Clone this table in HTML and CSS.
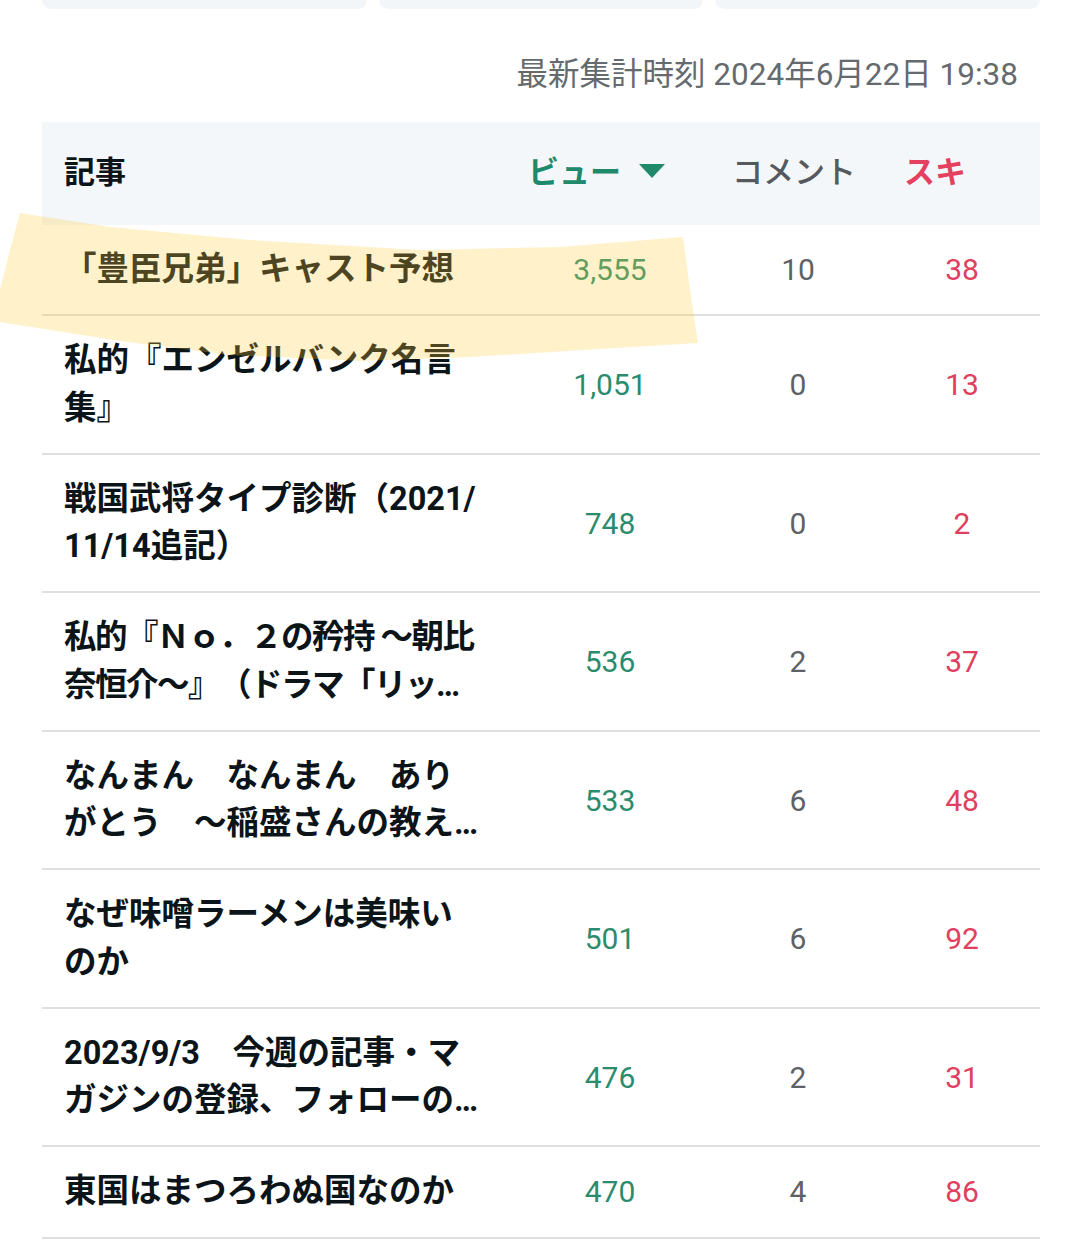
FILE: index.html
```html
<!DOCTYPE html>
<html lang="ja">
<head>
<meta charset="utf-8">
<title>記事アクセス状況</title>
<link rel="stylesheet" href="styles.css">
</head>
<body>
<div class="page">
  <div class="cards">
    <div class="card"></div>
    <div class="card"></div>
    <div class="card"></div>
  </div>
  <div class="stamp">最新集計時刻 2024年6月22日 19:38</div>
  <div class="table">
    <div class="row head">
      <div class="h-title">記事</div>
      <div class="h-view">ビュー<svg class="tri" width="26" height="14" viewBox="0 0 26 14"><polygon points="0,0 26,0 13,14" fill="#1f8a6b"/></svg></div>
      <div class="h-comment">コメント</div>
      <div class="h-like">スキ</div>
    </div>
    <div class="row">
      <div class="title">「豊臣兄弟」キャスト予想</div>
      <div class="num view">3,555</div>
      <div class="num comment">10</div>
      <div class="num like">38</div>
    </div>
    <div class="row">
      <div class="title">私的『エンゼルバンク名言集』</div>
      <div class="num view">1,051</div>
      <div class="num comment">0</div>
      <div class="num like">13</div>
    </div>
    <div class="row">
      <div class="title">戦国武将タイプ診断（2021/<wbr>11/14追記）</div>
      <div class="num view">748</div>
      <div class="num comment">0</div>
      <div class="num like">2</div>
    </div>
    <div class="row">
      <div class="title tight">私的『Ｎｏ．２の矜持 ～朝比奈恒介～』（ドラマ「リッチマン、プアウーマン」）</div>
      <div class="num view">536</div>
      <div class="num comment">2</div>
      <div class="num like">37</div>
    </div>
    <div class="row">
      <div class="title">なんまん　なんまん　ありがとう　～稲盛さんの教え～</div>
      <div class="num view">533</div>
      <div class="num comment">6</div>
      <div class="num like">48</div>
    </div>
    <div class="row">
      <div class="title">なぜ味噌ラーメンは美味いのか</div>
      <div class="num view">501</div>
      <div class="num comment">6</div>
      <div class="num like">92</div>
    </div>
    <div class="row">
      <div class="title">2023/9/3　今週の記事・マガジンの登録、フォローのお礼</div>
      <div class="num view">476</div>
      <div class="num comment">2</div>
      <div class="num like">31</div>
    </div>
    <div class="row">
      <div class="title">東国はまつろわぬ国なのか</div>
      <div class="num view">470</div>
      <div class="num comment">4</div>
      <div class="num like">86</div>
    </div>
  </div>
  <svg class="marker" width="1065" height="400" viewBox="0 0 1065 400">
    <polygon points="20,213 110,227 250,240 420,250 560,247 683,237 690,290 698,343 600,349 470,357 360,361 230,355 120,341 0,322 0,290 10,250" fill="rgba(255,204,60,0.27)"/>
  </svg>
</div>
</body>
</html>
```
FILE: styles.css
```css
* { box-sizing: border-box; }
html, body { margin: 0; padding: 0; background: #ffffff; }
body {
  font-family: "Noto Sans CJK JP", "Noto Sans", sans-serif;
  color: #0b1419;
  text-spacing-trim: space-all;
}
.page {
  position: relative;
  width: 1065px;
  padding: 0 25px 0 42px;
}
.cards {
  display: flex;
  gap: 12px;
}
.card {
  flex: 1;
  height: 9px;
  background: #f3f6f8;
  border-radius: 0 0 12px 12px;
}
.stamp {
  text-align: right;
  padding-right: 22px;
  margin-top: 46px;
  margin-bottom: 27px;
  height: 40px;
  line-height: 40px;
  font-family: Roboto, "Noto Sans CJK JP", sans-serif;
  font-size: 31.5px;
  color: #656a6e;
}
.table {
  width: 998px;
}
.row {
  display: grid;
  grid-template-columns: 421px 158px 126px 110px;
  column-gap: 46px;
  align-items: center;
  padding: 21px 0 21px 22px;
  border-bottom: 2px solid #dedfe0;
}
.row.head {
  background: #f4f7f9;
  border-bottom: none;
  height: 103px;
  padding-top: 0;
  padding-bottom: 8px;
  font-size: 31px;
  font-weight: 700;
  grid-template-columns: 418px 158px 126px 110px;
}
.h-title { color: #0b1419; }
.h-view {
  color: #1f8a6b;
  display: flex;
  align-items: center;
  gap: 18px;
}
.tri { display: block; margin-top: 2px; }
.h-comment { color: #55595d; font-weight: 500; }
.h-like { color: #e4405f; }
.title {
  width: 418px;
  font-family: Roboto, "Noto Sans CJK JP", sans-serif;
  font-size: 32.5px;
  font-weight: 700;
  line-height: 47.25px;
  display: -webkit-box;
  -webkit-line-clamp: 2;
  -webkit-box-orient: vertical;
  overflow: hidden;
}
.title.tight { letter-spacing: -1.5px; }
.num {
  text-align: center;
  font-family: Roboto, "Noto Sans", sans-serif;
  font-size: 30px;
}
.view { color: #2a8c6c; }
.comment { color: #5e6266; }
.like { color: #e0405e; }
.marker {
  position: absolute;
  left: 0;
  top: 0;
  pointer-events: none;
}
```
